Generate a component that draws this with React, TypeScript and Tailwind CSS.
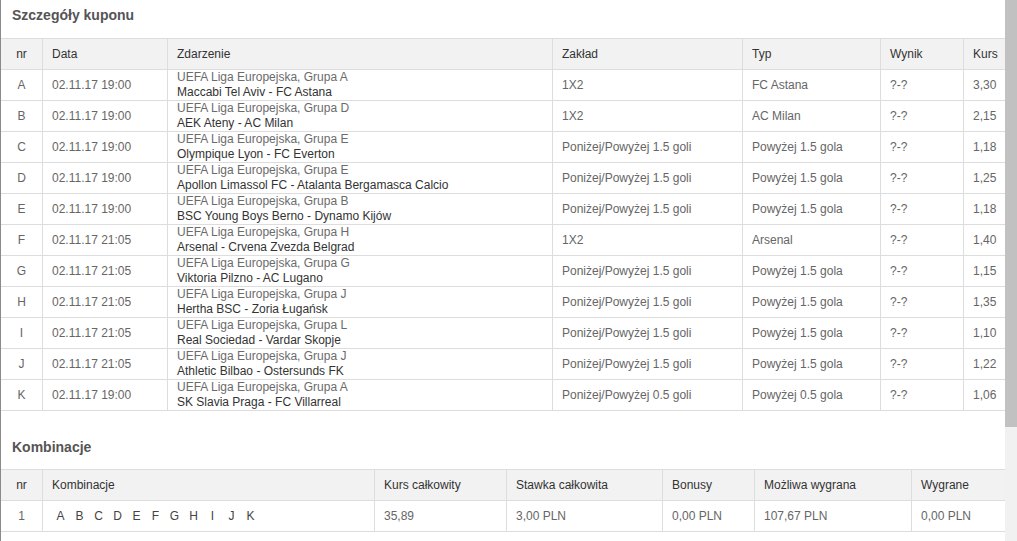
import React from 'react';

type Bet = {
  nr: string;
  date: string;
  league: string;
  match: string;
  market: string;
  pick: string;
  result: string;
  odds: string;
};

const bets: Bet[] = [
  { nr: 'A', date: '02.11.17 19:00', league: 'UEFA Liga Europejska, Grupa A', match: 'Maccabi Tel Aviv - FC Astana', market: '1X2', pick: 'FC Astana', result: '?-?', odds: '3,30' },
  { nr: 'B', date: '02.11.17 19:00', league: 'UEFA Liga Europejska, Grupa D', match: 'AEK Ateny - AC Milan', market: '1X2', pick: 'AC Milan', result: '?-?', odds: '2,15' },
  { nr: 'C', date: '02.11.17 19:00', league: 'UEFA Liga Europejska, Grupa E', match: 'Olympique Lyon - FC Everton', market: 'Poniżej/Powyżej 1.5 goli', pick: 'Powyżej 1.5 gola', result: '?-?', odds: '1,18' },
  { nr: 'D', date: '02.11.17 19:00', league: 'UEFA Liga Europejska, Grupa E', match: 'Apollon Limassol FC - Atalanta Bergamasca Calcio', market: 'Poniżej/Powyżej 1.5 goli', pick: 'Powyżej 1.5 gola', result: '?-?', odds: '1,25' },
  { nr: 'E', date: '02.11.17 19:00', league: 'UEFA Liga Europejska, Grupa B', match: 'BSC Young Boys Berno - Dynamo Kijów', market: 'Poniżej/Powyżej 1.5 goli', pick: 'Powyżej 1.5 gola', result: '?-?', odds: '1,18' },
  { nr: 'F', date: '02.11.17 21:05', league: 'UEFA Liga Europejska, Grupa H', match: 'Arsenal - Crvena Zvezda Belgrad', market: '1X2', pick: 'Arsenal', result: '?-?', odds: '1,40' },
  { nr: 'G', date: '02.11.17 21:05', league: 'UEFA Liga Europejska, Grupa G', match: 'Viktoria Pilzno - AC Lugano', market: 'Poniżej/Powyżej 1.5 goli', pick: 'Powyżej 1.5 gola', result: '?-?', odds: '1,15' },
  { nr: 'H', date: '02.11.17 21:05', league: 'UEFA Liga Europejska, Grupa J', match: 'Hertha BSC - Zoria Ługańsk', market: 'Poniżej/Powyżej 1.5 goli', pick: 'Powyżej 1.5 gola', result: '?-?', odds: '1,35' },
  { nr: 'I', date: '02.11.17 21:05', league: 'UEFA Liga Europejska, Grupa L', match: 'Real Sociedad - Vardar Skopje', market: 'Poniżej/Powyżej 1.5 goli', pick: 'Powyżej 1.5 gola', result: '?-?', odds: '1,10' },
  { nr: 'J', date: '02.11.17 21:05', league: 'UEFA Liga Europejska, Grupa J', match: 'Athletic Bilbao - Ostersunds FK', market: 'Poniżej/Powyżej 1.5 goli', pick: 'Powyżej 1.5 gola', result: '?-?', odds: '1,22' },
  { nr: 'K', date: '02.11.17 19:00', league: 'UEFA Liga Europejska, Grupa A', match: 'SK Slavia Praga - FC Villarreal', market: 'Poniżej/Powyżej 0.5 goli', pick: 'Powyżej 0.5 gola', result: '?-?', odds: '1,06' },
];

const letters = ['A', 'B', 'C', 'D', 'E', 'F', 'G', 'H', 'I', 'J', 'K'];

const betCols = 'grid grid-cols-[42px_125px_385px_190px_138px_83px_41px]';
const comboCols = 'grid grid-cols-[42px_332px_132px_156px_92px_157px_93px]';

const cell = 'flex items-center pl-[9px] border-r border-[#ddd] whitespace-nowrap overflow-hidden';
const lastCell = 'flex items-center pl-[9px] whitespace-nowrap overflow-hidden';
const nrCell = 'flex items-center justify-center border-r border-[#ddd]';

export default function App() {
  return (
    <div
      className="flex w-full h-[541px] bg-white text-[12px] overflow-hidden"
      style={{ fontFamily: '"Liberation Sans", Arial, sans-serif' }}
    >
      {/* Content */}
      <div className="flex-1 border-l border-[#8a8a8a]">
        <div className="w-[1004px]">
          <div className="h-[38px] pt-[7px] pl-[11px] text-[14px] leading-4 font-bold text-[#555]">
            Szczegóły kuponu
          </div>

          {/* Bets header */}
          <div className={`${betCols} h-[32px] bg-[#f2f2f2] border-y border-[#ddd] text-[#333]`}>
            <div className={nrCell}>nr</div>
            <div className={cell}>Data</div>
            <div className={cell}>Zdarzenie</div>
            <div className={cell}>Zakład</div>
            <div className={cell}>Typ</div>
            <div className={cell}>Wynik</div>
            <div className={lastCell}>Kurs</div>
          </div>

          {bets.map((b) => (
            <div key={b.nr} className={`${betCols} h-[31px] border-b border-[#ddd] text-[#666]`}>
              <div className={nrCell}>{b.nr}</div>
              <div className={cell}>{b.date}</div>
              <div className="flex flex-col justify-center pl-[9px] border-r border-[#ddd] leading-[15px] whitespace-nowrap overflow-hidden">
                <span className="text-[#6b6b6b]">{b.league}</span>
                <span className="text-[#333]">{b.match}</span>
              </div>
              <div className={cell}>{b.market}</div>
              <div className={cell}>{b.pick}</div>
              <div className={cell}>{b.result}</div>
              <div className={lastCell}>{b.odds}</div>
            </div>
          ))}

          <div className="h-[58px] pt-[28px] pl-[11px] text-[14px] leading-4 font-bold text-[#555]">
            Kombinacje
          </div>

          {/* Combinations header */}
          <div className={`${comboCols} h-[32px] bg-[#f2f2f2] border-y border-[#ddd] text-[#333]`}>
            <div className={nrCell}>nr</div>
            <div className={cell}>Kombinacje</div>
            <div className={cell}>Kurs całkowity</div>
            <div className={cell}>Stawka całkowita</div>
            <div className={cell}>Bonusy</div>
            <div className={cell}>Możliwa wygrana</div>
            <div className={lastCell}>Wygrane</div>
          </div>

          <div className={`${comboCols} h-[31px] border-b border-[#ddd] text-[#666]`}>
            <div className={nrCell}>1</div>
            <div className="flex items-center pl-[8px] border-r border-[#ddd] text-[#444]">
              {letters.map((l) => (
                <span key={l} className="inline-block w-[19px] text-center">
                  {l}
                </span>
              ))}
            </div>
            <div className={cell}>35,89</div>
            <div className={cell}>3,00 PLN</div>
            <div className={cell}>0,00 PLN</div>
            <div className={cell}>107,67 PLN</div>
            <div className={lastCell}>0,00 PLN</div>
          </div>
        </div>
      </div>

      {/* Scrollbar */}
      <div className="w-[12px] shrink-0 bg-[#f1f1f1]">
        <div className="h-[427px] bg-[#c1c1c1]" />
      </div>
    </div>
  );
}
